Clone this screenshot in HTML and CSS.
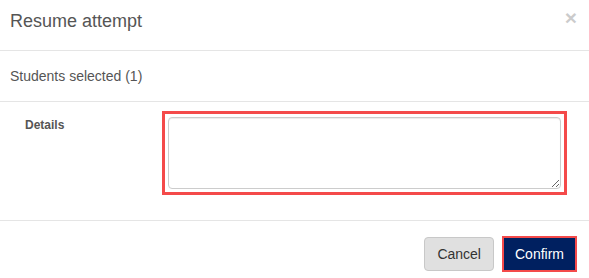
FILE: index.html
```html
<!DOCTYPE html>
<html lang="en">
<head>
    <meta charset="UTF-8">
    <title>Resume attempt</title>
    <link rel="stylesheet" href="styles.css">
</head>
<body>
    <div class="modal">
        <div class="modal-header">
            <h4 class="modal-title">Resume attempt</h4>
            <button class="close" type="button">&times;</button>
        </div>

        <div class="modal-section">
            Students selected (1)
        </div>

        <div class="modal-form">
            <label class="form-label" for="details">Details</label>
            <div class="highlight">
                <textarea id="details" class="form-control"></textarea>
            </div>
        </div>

        <div class="modal-footer">
            <button class="btn btn-default" type="button">Cancel</button>
            <button class="btn btn-primary" type="button">Confirm</button>
        </div>
    </div>
</body>
</html>
```

FILE: styles.css
```css
body {
    margin: 0;
    font-family: "Liberation Sans", Arial, sans-serif;
    background-color: #fff;
    color: #555;
}

.modal {
    width: 589px;
}

.modal-header {
    display: flex;
    justify-content: space-between;
    align-items: center;
    height: 50px;
    padding: 0 10px;
    border-bottom: 1px solid #e5e5e5;
}

.modal-title {
    margin: 0;
    margin-top: -7px;
    font-size: 18px;
    font-weight: normal;
    color: #555;
}

.close {
    background: none;
    border: none;
    padding: 0;
    margin-top: -16px;
    margin-right: 2px;
    font-family: "Liberation Sans", Arial, sans-serif;
    font-size: 21px;
    font-weight: bold;
    line-height: 1;
    color: #000;
    opacity: 0.2;
    cursor: pointer;
}

.modal-section {
    height: 50px;
    padding: 0 10px;
    display: flex;
    align-items: center;
    font-size: 14px;
    color: #555;
    border-bottom: 1px solid #e5e5e5;
}

.modal-form {
    display: flex;
    align-items: flex-start;
    height: 109px;
    padding: 9px 22px 0 22px;
    border-bottom: 1px solid #e5e5e5;
}

.form-label {
    flex-shrink: 0;
    box-sizing: border-box;
    width: 140px;
    padding: 7px 0 0 3px;
    font-size: 12px;
    font-weight: bold;
    color: #555;
}

.highlight {
    flex-shrink: 0;
    border: 3px solid #f44a4a;
    padding: 3px;
    width: 405px;
    box-sizing: border-box;
}

.form-control {
    display: block;
    width: 100%;
    height: 72px;
    box-sizing: border-box;
    border: 1px solid #ccc;
    border-radius: 4px;
    box-shadow: inset 0 1px 1px rgba(0, 0, 0, 0.075);
    font-family: "Liberation Sans", Arial, sans-serif;
    font-size: 14px;
    resize: vertical;
}

.modal-footer {
    display: flex;
    justify-content: flex-end;
    align-items: center;
    padding: 15px 12px 0 0;
    gap: 8px;
}

.btn {
    font-family: "Liberation Sans", Arial, sans-serif;
    font-size: 14px;
    cursor: pointer;
    box-sizing: border-box;
}

.btn-default {
    height: 34px;
    padding: 0 12px;
    background-color: #e0e0e0;
    color: #333;
    border: 1px solid #c8c8c8;
    border-radius: 4px;
}

.btn-primary {
    height: 36px;
    padding: 0 11px;
    background-color: #002060;
    color: #fff;
    border: 2px solid #f44a4a;
    border-radius: 0;
}
```
